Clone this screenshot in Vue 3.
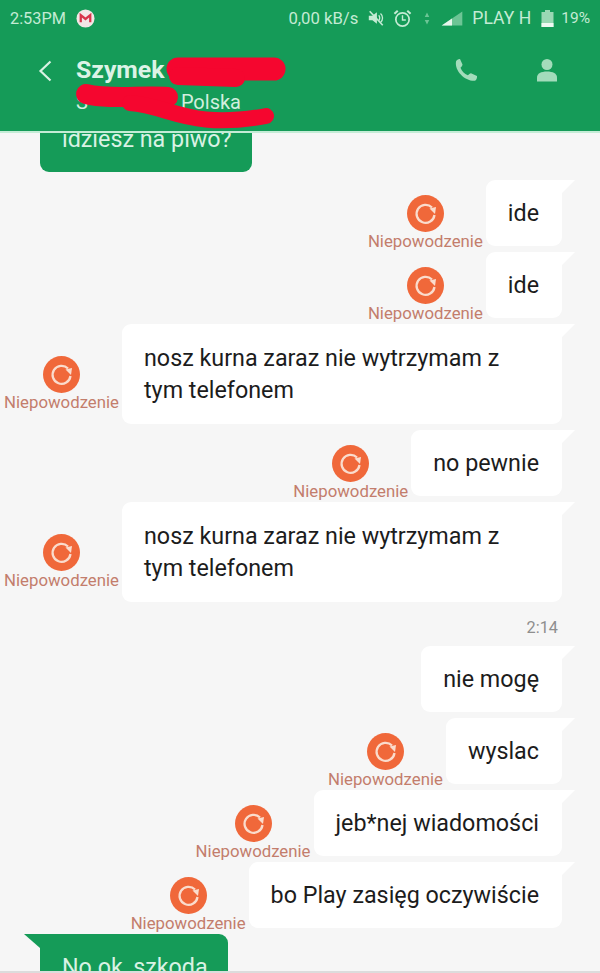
<template>
  <div class="page">
    <header class="head">
      <div class="status">
        <span class="clock">2:53PM</span>
        <svg class="gmail" viewBox="0 0 20 20">
          <circle cx="10" cy="10" r="9.5" fill="#f3e6e6" />
          <path d="M5 14V6.5L10 10.5L15 6.5V14" fill="none" stroke="#d8344a" stroke-width="2.4" />
        </svg>
        <span class="spacer"></span>
        <span class="speed">0,00 kB/s</span>
        <svg class="ic-mute" viewBox="0 0 20 20">
          <path d="M2 7.5H6L11 3.5V16.5L6 12.5H2Z" fill="#c4ebd4" />
          <path d="M13 7C14.500 8.500 14.500 11.500 13 13M15 5C18 7.500 18 12.500 15 15" fill="none" stroke="#c4ebd4" stroke-width="1.500" />
          <path d="M3 2.500L17.500 18" stroke="#c4ebd4" stroke-width="1.800" />
        </svg>
        <svg class="ic-alarm" viewBox="0 0 20 20">
          <circle cx="10" cy="11" r="7" fill="none" stroke="#c4ebd4" stroke-width="1.800" />
          <path d="M10 6.500V11.500H13.500" fill="none" stroke="#c4ebd4" stroke-width="1.500" />
          <path d="M1.500 5L5 1.800M18.500 5L15 1.800" stroke="#c4ebd4" stroke-width="2.200" />
        </svg>
        <svg class="ic-arrows" viewBox="0 0 8 20">
          <path d="M4 2L7 8H1Z M4 18L1 12H7Z" fill="#6cc595" />
        </svg>
        <svg class="ic-signal" viewBox="0 0 22 16">
          <path d="M0 15.500L22 0.500V15.500Z" fill="#6cc595" />
          <path d="M0 15.500L11 8V15.500Z" fill="#e6f6ec" />
        </svg>
        <span class="carrier">PLAY H</span>
        <svg class="ic-batt" viewBox="0 0 13 17">
          <path d="M4 0H9V2H12.500V17H0.500V2H4Z" fill="#9ad8b4" />
          <rect x="0.500" y="13" width="12" height="4" fill="#eef9f2" />
        </svg>
        <span class="pct">19%</span>
      </div>
      <div class="nav">
        <svg class="back" viewBox="0 0 14 22">
          <path d="M12.500 1.500L2.500 11L12.500 20.500" fill="none" stroke="#d8f2e3" stroke-width="2.200" />
        </svg>
        <div class="who">
          <div class="name">Szymek</div>
          <div class="sub"><span>S</span><span>Polska</span></div>
        </div>
        <svg class="ic-phone" viewBox="0 0 24 24">
          <path d="M2 3.500C2.500 2 4.500 0.800 6 1L8.500 6.500C8.500 8 7 9 6.500 9.800C7.500 12.800 10.500 16 13.800 17.300C14.800 16.800 15.800 15.300 17 15.300L23 18C23.300 19.500 22.500 22 21 22.800C11 23.500 0.500 13 2 3.500Z" fill="#a3dcbb" />
        </svg>
        <svg class="ic-person" viewBox="0 0 20 24">
          <circle cx="10" cy="6.500" r="5.500" fill="#a3dcbb" />
          <path d="M0 23.500V19.500C0 15.500 4 13.500 10 13.500C16 13.500 20 15.500 20 19.500V23.500Z" fill="#a3dcbb" />
        </svg>
      </div>
      <svg class="scribble" viewBox="0 0 600 133">
        <path d="M178 69L274 69" stroke="#f5062f" stroke-width="23" stroke-linecap="round" fill="none" />
        <path d="M178 76L236 78" stroke="#f5062f" stroke-width="18" stroke-linecap="round" fill="none" />
        <path d="M86 94C110 100 140 95 168 97" stroke="#f5062f" stroke-width="20" stroke-linecap="round" fill="none" />
        <path d="M130 103C170 106 190 130 266 116" stroke="#f5062f" stroke-width="16" stroke-linecap="round" fill="none" />
      </svg>
    </header>

    <main class="list">
      <template v-for="(m, i) in messages" :key="i">
        <div v-if="m.time" class="time">{{ m.time }}</div>
        <div v-else class="row" :class="m.mine ? 'mine' : 'theirs'">
          <div v-if="m.failed" class="fail">
            <svg class="retry" viewBox="0 0 37 37">
              <circle cx="18.500" cy="18.500" r="18.500" fill="#f0683a" />
              <path d="M25 12.500A9 9 0 1 0 27.500 20" fill="none" stroke="#fadccd" stroke-width="2.300" />
              <path d="M22.500 13.500L29 12L28 19Z" fill="#fadccd" />
            </svg>
            <span class="fail-text">Niepowodzenie</span>
          </div>
          <div class="bubble" :class="{ tail: m.tail !== false, multi: m.multi }">{{ m.text }}</div>
        </div>
      </template>
    </main>
    <div class="edge"></div>
  </div>
</template>

<script setup>
const messages = [
  { text: 'idziesz na piwo?', mine: false, tail: false },
  { text: 'ide', mine: true, failed: true },
  { text: 'ide', mine: true, failed: true },
  { text: 'nosz kurna zaraz nie wytrzymam z tym telefonem', mine: true, failed: true, multi: true },
  { text: 'no pewnie', mine: true, failed: true },
  { text: 'nosz kurna zaraz nie wytrzymam z tym telefonem', mine: true, failed: true, multi: true },
  { time: '2:14' },
  { text: 'nie mogę', mine: true },
  { text: 'wyslac', mine: true, failed: true },
  { text: 'jeb*nej wiadomości', mine: true, failed: true },
  { text: 'bo Play zasięg oczywiście', mine: true, failed: true },
  { text: 'No ok, szkoda', mine: false },
]
</script>

<style>
html,
body {
  margin: 0;
  background: #f6f6f6;
}
</style>

<style scoped>
.page {
  width: 600px;
  height: 973px;
  display: flex;
  flex-direction: column;
  overflow: hidden;
  background: #f6f6f6;
  font-family: Roboto, "Liberation Sans", sans-serif;
}
.head {
  position: relative;
  flex: none;
  height: 131px;
  background: #159b58;
  border-bottom: 2px solid #c4ecd6;
  z-index: 1;
}
.status {
  height: 36px;
  display: flex;
  align-items: center;
  padding: 0 10px;
  font-size: 16.3px;
  color: #c4ebd4;
}
.gmail {
  width: 19px;
  height: 19px;
  margin-left: 10px;
}
.spacer {
  flex: 1;
}
.speed {
  font-size: 16.7px;
}
.ic-mute {
  width: 18px;
  height: 18px;
  margin-left: 9px;
}
.ic-alarm {
  width: 19px;
  height: 19px;
  margin-left: 8px;
}
.ic-arrows {
  width: 6px;
  height: 15px;
  margin-left: 12px;
}
.ic-signal {
  width: 22px;
  height: 15px;
  margin-left: 11px;
}
.carrier {
  margin-left: 9px;
  font-size: 17.6px;
}
.ic-batt {
  width: 13px;
  height: 17px;
  margin-left: 10px;
}
.pct {
  margin-left: 7px;
  font-size: 15.5px;
}
.nav {
  display: flex;
  align-items: flex-start;
  padding: 19px 43px 0 38px;
}
.back {
  width: 14px;
  height: 22px;
  margin-top: 5px;
}
.who {
  flex: 1;
  margin-left: 24px;
}
.name {
  font-size: 24.8px;
  font-weight: 700;
  line-height: 30px;
  color: #dcf3e6;
}
.sub {
  display: flex;
  gap: 93px;
  margin-top: 4px;
  font-size: 20px;
  line-height: 26px;
  color: #d3efdf;
}
.ic-phone {
  width: 24px;
  height: 24px;
  margin-top: 3px;
}
.ic-person {
  width: 20px;
  height: 24px;
  margin-top: 3px;
  margin-left: 59px;
}
.scribble {
  position: absolute;
  left: 0;
  top: 0;
  width: 600px;
  height: 133px;
}
.list {
  flex: 1;
  min-height: 0;
  overflow: hidden;
  display: flex;
  flex-direction: column;
  gap: 6px;
}
.row {
  flex: none;
  display: flex;
  align-items: center;
}
.row:first-child {
  margin-top: -27px;
  margin-bottom: 2px;
}
.mine {
  justify-content: flex-end;
  padding-right: 38px;
}
.theirs {
  padding-left: 40px;
}
.fail {
  display: flex;
  flex-direction: column;
  align-items: center;
  margin-right: 3px;
}
.retry {
  width: 37px;
  height: 37px;
}
.fail-text {
  font-size: 16.8px;
  line-height: 17px;
  margin-top: 1px;
  margin-bottom: -18px;
  color: #c37d6c;
  white-space: nowrap;
}
.bubble {
  position: relative;
  box-sizing: border-box;
  max-width: 440px;
  padding: 17px 23px 17px 22px;
  border-radius: 9px;
  font-size: 23.3px;
  line-height: 32px;
  background: #fff;
  color: #1c1c1c;
}
.bubble.multi {
  padding-top: 18px;
  padding-bottom: 18px;
}
.mine .bubble.tail {
  border-top-right-radius: 0;
}
.mine .bubble.tail::after {
  content: "";
  position: absolute;
  top: 0;
  left: 100%;
  border-top: 13px solid #fff;
  border-right: 13px solid transparent;
}
.theirs .bubble {
  padding-right: 20px;
  background: #159b58;
  color: #d9f2e4;
}
.theirs .bubble.tail {
  border-top-left-radius: 0;
}
.theirs .bubble.tail::after {
  content: "";
  position: absolute;
  top: 0;
  right: 100%;
  border-top: 14px solid #159b58;
  border-left: 16px solid transparent;
}
.time {
  flex: none;
  height: 32px;
  padding: 10px 42px 0 0;
  box-sizing: border-box;
  text-align: right;
  font-size: 16.3px;
  line-height: 20px;
  color: #8e8e8e;
}
.edge {
  flex: none;
  height: 2px;
  background: #dcdcdc;
}
</style>
